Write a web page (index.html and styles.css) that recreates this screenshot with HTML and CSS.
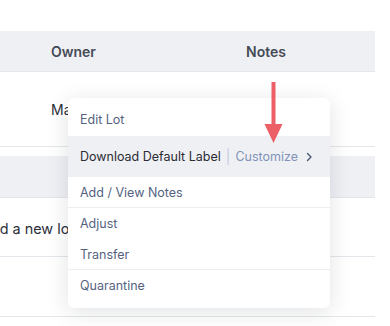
FILE: index.html
```html
<!DOCTYPE html>
<html lang="en">
<head>
  <meta charset="UTF-8" />
  <title>Lots</title>
  <link rel="stylesheet" href="styles.css">
</head>
<body>
  <div class="page">
    <div class="table">
      <div class="row head">
        <div class="cell owner">Owner</div>
        <div class="cell notes">Notes</div>
      </div>
      <div class="row lot">
        <div class="cell owner">Main Warehouse</div>
        <div class="cell notes"></div>
      </div>
      <div class="spacer"></div>
      <div class="row band"></div>
      <div class="row empty">
        <div class="cell wide">Add a new lot to start tracking inventory</div>
      </div>
      <div class="row blank"></div>
    </div>

    <div class="menu">
      <div class="item">Edit Lot</div>
      <div class="item active">
        <span class="main">Download Default Label</span>
        <span class="sep">|</span>
        <span class="link">Customize</span>
        <svg class="chev" width="7" height="10" viewBox="0 0 7 10"><path d="M1.5 1.5 L5 5 L1.5 8.5" fill="none" stroke="#4a5670" stroke-width="1.4" stroke-linecap="round" stroke-linejoin="round"/></svg>
      </div>
      <div class="item short line">Add / View Notes</div>
      <div class="item short">Adjust</div>
      <div class="item short line">Transfer</div>
      <div class="item short">Quarantine</div>
    </div>

    <svg class="arrow" width="20" height="62" viewBox="0 0 20 62">
      <rect x="7.5" y="0" width="4" height="44" fill="#ec5f66"/>
      <polygon points="0.5,42 18.5,42 9.5,61" fill="#ec5f66"/>
    </svg>
  </div>
</body>
</html>
```

FILE: styles.css
```css
* {
  box-sizing: border-box;
}

body {
  margin: 0;
  background: #ffffff;
  font-family: 'Inter', sans-serif;
  overflow: hidden;
}

.page {
  position: relative;
  width: 390px;
  height: 326px;
  padding-top: 31px;
}

.table {
  width: 375px;
}

.row {
  display: flex;
  align-items: center;
  border-bottom: 1px solid #e4e6eb;
}

.cell {
  font-size: 14px;
  color: #2b2f3a;
  white-space: nowrap;
}

.cell.owner {
  width: 246px;
  padding-left: 51px;
  overflow: hidden;
}

.head {
  height: 41px;
  background: #eff0f4;
}

.head .cell {
  font-weight: 600;
  color: #454b57;
}

.lot {
  height: 75px;
}

.spacer {
  height: 9px;
}

.band {
  height: 42px;
  background: #eff0f4;
}

.empty {
  height: 59px;
  padding-top: 3px;
}

.cell.wide {
  margin-left: -19px;
  font-size: 14.4px;
}

.blank {
  height: 60px;
}

.menu {
  position: absolute;
  left: 68px;
  top: 98px;
  width: 262px;
  padding: 4px 0 7px;
  background: #ffffff;
  border-radius: 6px;
  box-shadow: 0 4px 22px rgba(20, 30, 50, 0.13);
}

.item {
  display: flex;
  align-items: center;
  height: 34px;
  padding: 0 12px;
  font-size: 12.5px;
  color: #55627f;
  white-space: nowrap;
}

.item.active {
  height: 41px;
  background: #eff0f4;
}

.item.short {
  height: 31px;
}

.item.line {
  border-bottom: 1px solid #eceef2;
}

.main {
  color: #2a2c33;
}

.sep {
  margin: 0 5px 0 5px;
  color: #c3cbdd;
  font-size: 14px;
}

.link {
  color: #8193b8;
}

.chev {
  flex-shrink: 0;
  margin-left: 8px;
}

.arrow {
  position: absolute;
  left: 264px;
  top: 82px;
}
```
